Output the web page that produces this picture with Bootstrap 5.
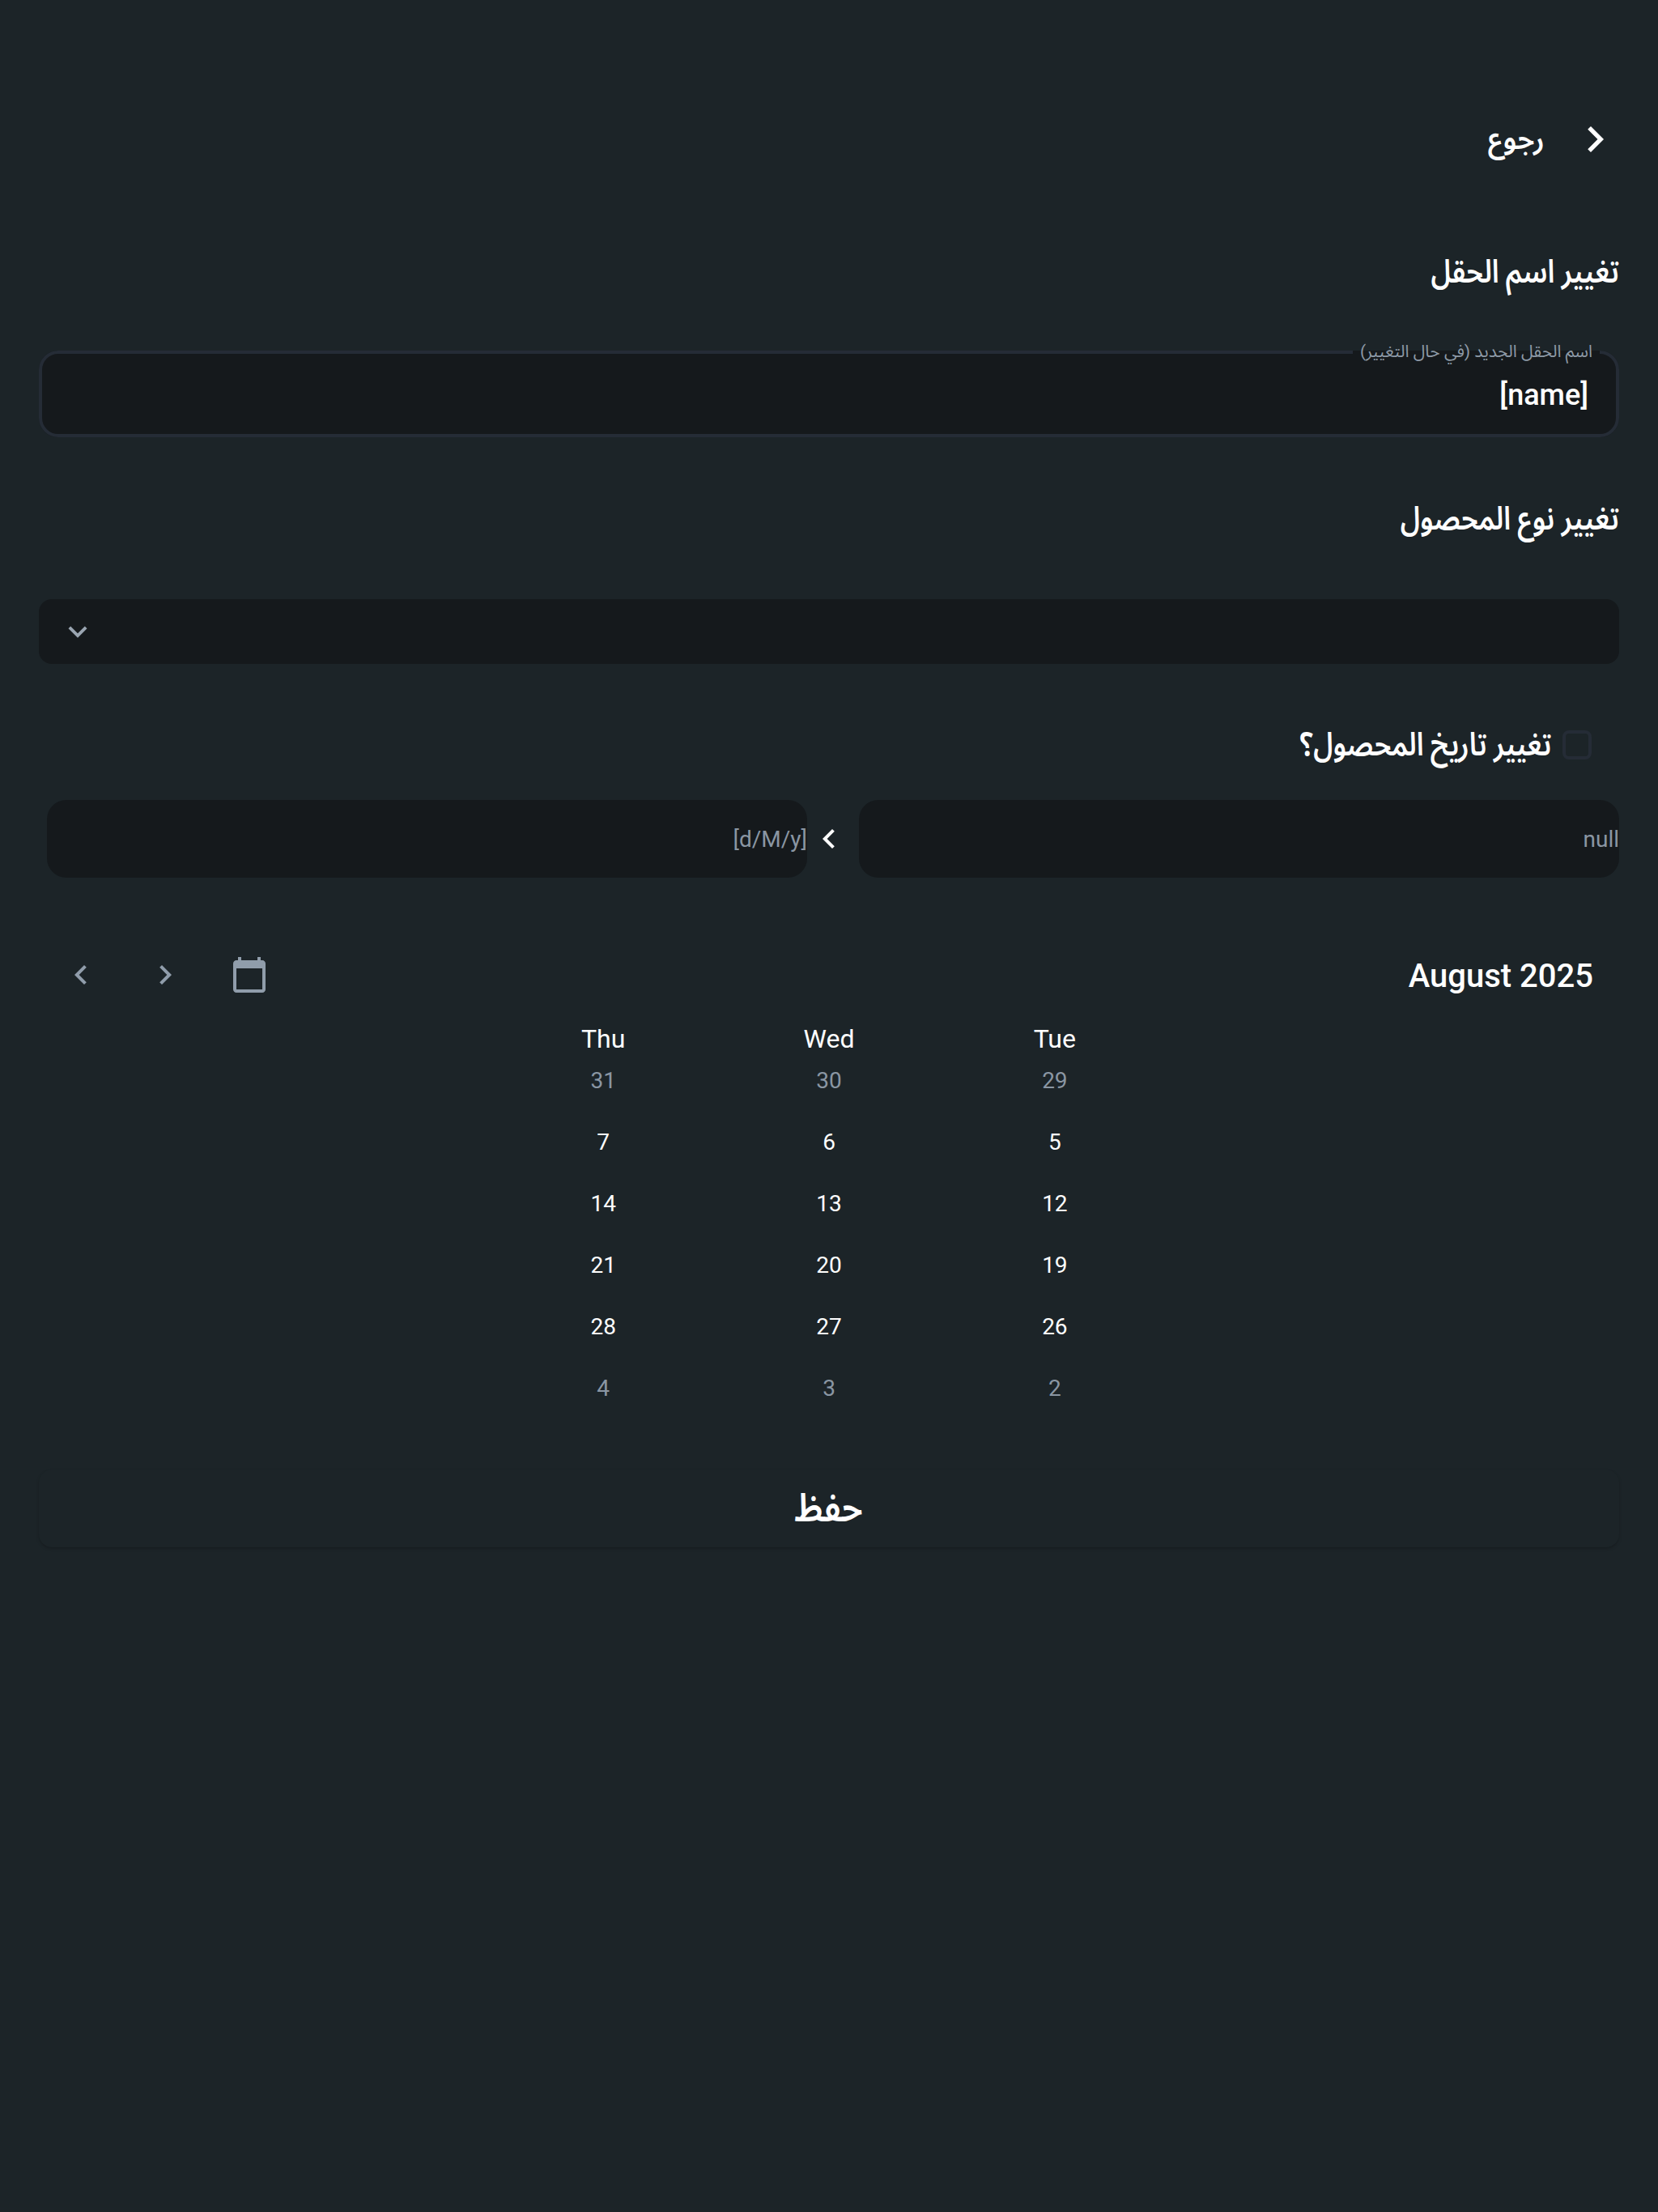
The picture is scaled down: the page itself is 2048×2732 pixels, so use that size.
<!DOCTYPE html>
<html lang="ar" dir="rtl">
<head>
<meta charset="utf-8">
<title>تغيير اسم الحقل</title>
<link href="https://cdn.jsdelivr.net/npm/bootstrap@5.3.0/dist/css/bootstrap.min.css" rel="stylesheet">
<style>
body{background:#1c2428;color:#fff;font-family:Roboto,"Noto Sans Arabic","DejaVu Sans",sans-serif;min-height:2732px;}
.pg-wrap{padding:140px 48px 0;}
.back-row{height:64px;padding-inline-start:19px;gap:49px;}
.back-text{font-size:36px;font-weight:600;line-height:64px;display:inline-block;transform:scaleX(.96);transform-origin:right center;}
.sec-title{font-size:40px;font-weight:600;line-height:60px;margin:0;transform:scaleX(.85);transform-origin:right center;}
.t1{margin-top:102px;}
.name-box{margin:58px 0 0;height:116px;border:4px solid #252c36;border-radius:24px;background:#15191c;padding:0 34px;min-width:0;}
.name-val{font-size:36px;font-weight:500;line-height:46px;margin-top:19px;color:#fff;}
.name-box legend{float:none;width:auto;margin:0;margin-inline-start:-14px;padding:0 9px 2px;font-size:21px;line-height:20px;color:#8d99a6;}
.t2{margin-top:71px;}
.sel-box{margin-top:69px;height:80px;background:#15191c;border-radius:16px;padding-inline-end:25px;}
.chk-row{margin-top:64px;height:72px;padding-inline-start:34px;gap:14px;}
.chk-box.form-check-input{width:36px;height:36px;margin:0;background-color:#1c2428;border:4px solid #252c36;border-radius:8px;flex:none;float:none;}
.chk-text{font-size:40px;font-weight:600;line-height:72px;display:inline-block;transform:scaleX(.85);transform-origin:right center;}
.range-row{margin-top:32px;padding-inline-end:10px;gap:64px;}
.range-box{flex:1 1 0;height:96px;background:#15191c;border-radius:24px;font-size:28px;color:#8a96a3;line-height:98px;padding:0;border:0;}
.range-wrap{position:relative;}
.range-sep{position:absolute;top:24px;left:50%;margin-left:-24px;width:48px;height:48px;}
.cal-head{margin-top:96px;height:48px;padding-inline-start:32px;padding-inline-end:28px;}
.cal-title{font-size:40px;font-weight:500;line-height:48px;padding-top:3px;}
.cal-tools{gap:56px;}
.cal-tools svg{display:block;}
.cal-grid{display:grid;grid-template-columns:repeat(7,1fr);text-align:center;}
.day-names{margin-top:42px;font-size:32px;line-height:26px;}
.day-cells{font-size:28px;line-height:76px;margin-top:1px;}
.off-day{color:#8a96a3;}
.save-btn.btn{display:block;width:100%;margin-top:62px;height:96px;background:#1c2428;border:0;border-radius:16px;color:#fff;font-size:48px;font-weight:600;line-height:96px;padding:0;box-shadow:0 2px 4px -1px rgba(0,0,0,.3);}
.save-text{display:inline-block;transform:scaleX(.89);}
</style>
</head>
<body>
<div class="pg-wrap">
  <div class="back-row d-flex align-items-center">
    <svg width="24" height="32" viewBox="7 6 9 12" fill="#fff"><path d="M10 6L8.59 7.41 13.17 12l-4.58 4.59L10 18l6-6z"/></svg>
    <span class="back-text">رجوع</span>
  </div>

  <h2 class="sec-title t1">تغيير اسم الحقل</h2>

  <fieldset class="name-box">
    <legend>اسم الحقل الجديد (في حال التغيير)</legend>
    <div class="name-val">[name]</div>
  </fieldset>

  <h2 class="sec-title t2">تغيير نوع المحصول</h2>

  <div class="sel-box d-flex align-items-center justify-content-end">
    <svg width="46" height="46" viewBox="0 0 24 24" fill="#9aa5b1"><path d="M7.41 8.59L12 13.17l4.59-4.58L18 10l-6 6-6-6 1.41-1.41z"/></svg>
  </div>

  <div class="chk-row d-flex align-items-center">
    <input class="chk-box form-check-input" type="checkbox" aria-label="تغيير تاريخ المحصول؟">
    <span class="chk-text">تغيير تاريخ المحصول؟</span>
  </div>

  <div class="range-wrap range-row d-flex">
    <div class="range-box">null</div>
    <svg class="range-sep" viewBox="0 0 24 24" fill="#fff"><path d="M15.41 7.41L14 6l-6 6 6 6 1.41-1.41L10.83 12z"/></svg>
    <div class="range-box">[d/M/y]</div>
  </div>

  <div class="cal-head d-flex align-items-center justify-content-between">
    <span class="cal-title">August 2025</span>
    <div class="cal-tools d-flex">
      <svg width="48" height="48" viewBox="0 0 24 24" fill="#909dab"><path d="M20 3h-1V1h-2v2H7V1H5v2H4c-1.1 0-2 .9-2 2v16c0 1.1.9 2 2 2h16c1.1 0 2-.9 2-2V5c0-1.1-.9-2-2-2zm0 18H4V8h16v13z"/></svg>
      <svg width="48" height="48" viewBox="0 0 24 24" fill="#909dab"><path d="M10 6L8.59 7.41 13.17 12l-4.58 4.59L10 18l6-6z"/></svg>
      <svg width="48" height="48" viewBox="0 0 24 24" fill="#909dab"><path d="M15.41 7.41L14 6l-6 6 6 6 1.41-1.41L10.83 12z"/></svg>
    </div>
  </div>

  <div class="cal-grid day-names">
    <div></div><div></div><div>Tue</div><div>Wed</div><div>Thu</div><div></div><div></div>
  </div>
  <div class="cal-grid day-cells">
    <div></div><div></div><div class="off-day">29</div><div class="off-day">30</div><div class="off-day">31</div><div></div><div></div>
    <div></div><div></div><div>5</div><div>6</div><div>7</div><div></div><div></div>
    <div></div><div></div><div>12</div><div>13</div><div>14</div><div></div><div></div>
    <div></div><div></div><div>19</div><div>20</div><div>21</div><div></div><div></div>
    <div></div><div></div><div>26</div><div>27</div><div>28</div><div></div><div></div>
    <div></div><div></div><div class="off-day">2</div><div class="off-day">3</div><div class="off-day">4</div><div></div><div></div>
  </div>

  <button type="button" class="save-btn btn"><span class="save-text">حفظ</span></button>
</div>
<script src="https://cdn.jsdelivr.net/npm/bootstrap@5.3.0/dist/js/bootstrap.bundle.min.js"></script>
</body>
</html>
